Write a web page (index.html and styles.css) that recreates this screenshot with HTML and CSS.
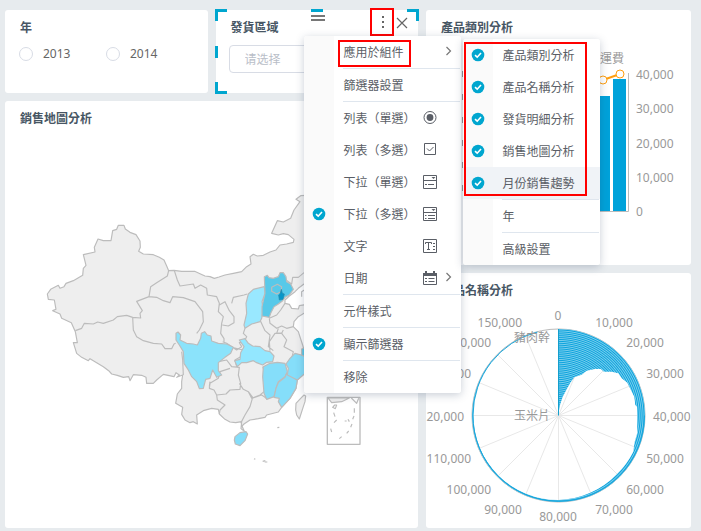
FILE: index.html
```html
<!DOCTYPE html>
<html lang="zh-Hant">
<head>
<meta charset="utf-8">
<meta name="viewport" content="width=device-width, initial-scale=1">
<title>銷售分析</title>
<link rel="stylesheet" href="styles.css">
</head>
<body>
<svg class="defs" width="0" height="0" aria-hidden="true">
  <symbol id="tick" viewBox="0 0 14 14"><circle cx="7" cy="7" r="6.3" fill="#00a6cf"/><path d="M4 7.2 6.2 9.2 10 5" fill="none" stroke="#fff" stroke-width="1.6"/></symbol>
  <symbol id="chevron" viewBox="0 0 8 14"><path d="M1.5 2 5.5 6 1.5 10" fill="none" stroke="#777" stroke-width="1.2"/></symbol>
</svg>
<main class="dashboard">
  <div class="column">
    <div class="filters">
      <section class="card">
        <h2 class="title">年</h2>
        <div class="radios">
          <label class="radio"><input type="radio" name="year">2013</label>
          <label class="radio"><input type="radio" name="year">2014</label>
        </div>
      </section>
      <section class="card selected">
        <h2 class="title"><label for="region">發貨區域</label></h2>
        <select id="region" class="select" lang="zh-Hans"><option>请选择</option></select>
        <svg class="grip" viewBox="0 0 14 6" aria-hidden="true"><path d="M0 1H14M0 5H14" stroke="#777" stroke-width="2"/></svg>
        <div class="tools">
          <button class="tool marked" aria-label="更多"><svg viewBox="0 0 20 22"><path d="M10 4h2v2h-2zM10 9h2v2h-2zM10 14h2v2h-2z" fill="#666"/></svg></button>
          <button class="tool" aria-label="關閉"><svg viewBox="0 0 16 22"><path d="M3 5 13 15M13 5 3 15" stroke="#666" stroke-width="1.2"/></svg></button>
        </div>
        <ul class="menu main-menu">
          <li>
            <button class="item"><span class="mark"></span><span class="name">應用於組件</span><svg class="arrow"><use href="#chevron"/></svg></button>
            <ul class="menu submenu">
              <li><button class="item"><svg class="mark"><use href="#tick"/></svg><span class="name">產品類別分析</span></button></li>
              <li><button class="item"><svg class="mark"><use href="#tick"/></svg><span class="name">產品名稱分析</span></button></li>
              <li><button class="item"><svg class="mark"><use href="#tick"/></svg><span class="name">發貨明細分析</span></button></li>
              <li><button class="item"><svg class="mark"><use href="#tick"/></svg><span class="name">銷售地圖分析</span></button></li>
              <li><button class="item active"><svg class="mark"><use href="#tick"/></svg><span class="name">月份銷售趨勢</span></button></li>
              <li class="divided"><button class="item"><span class="mark"></span><span class="name">年</span></button></li>
              <li class="divided"><button class="item"><span class="mark"></span><span class="name">高級設置</span></button></li>
            </ul>
          </li>
          <li class="divided"><button class="item"><span class="mark"></span><span class="name">篩選器設置</span></button></li>
          <li class="divided"><button class="item"><span class="mark"></span><span class="name">列表（單選）</span><svg class="icon" viewBox="0 0 14 14"><circle cx="7" cy="6.500" r="6"/><circle cx="7" cy="6.500" r="3.400" class="solid"/></svg></button></li>
          <li><button class="item"><span class="mark"></span><span class="name">列表（多選）</span><svg class="icon" viewBox="0 0 14 14"><path d="M1.500.500h11v11h-11zM4 5.500 6.500 8 10.500 4"/></svg></button></li>
          <li><button class="item"><span class="mark"></span><span class="name">下拉（單選）</span><svg class="icon" viewBox="0 0 14 14"><path d="M.5.5h13v13H.5zM.5 5.5h13M2 9.5h2M5 9.5h6"/><path d="M8.500 2h4l-2 2z" class="solid"/></svg></button></li>
          <li><button class="item"><svg class="mark"><use href="#tick"/></svg><span class="name">下拉（多選）</span><svg class="icon" viewBox="0 0 14 14"><path d="M.5.5h13v13H.5zM.5 5.500h13M2 8.500h1.500M5 8.500h7M2 11.500h1.500M5 11.500h7"/><path d="M8.500 2h4l-2 2z" class="solid"/></svg></button></li>
          <li><button class="item"><span class="mark"></span><span class="name">文字</span><svg class="icon" viewBox="0 0 14 14"><path d="M.5.5h13v13H.5zM2.500 5V3.500h6V5M5.500 3.500v7M4 10.500h3M10 4.500h2M10 7.500h2M10 10.500h2"/></svg></button></li>
          <li><button class="item"><span class="mark"></span><span class="name">日期</span><svg class="icon" viewBox="0 0 14 14"><path d="M.5 2.500h13v11H.5zM2 7.500h2M5.500 7.500h6M2 10.500h2M5.500 10.500h6"/><path d="M0 2h2V0h2v2h6V0h2v2h2v3H0z" class="solid"/></svg><svg class="arrow"><use href="#chevron"/></svg></button></li>
          <li class="divided"><button class="item"><span class="mark"></span><span class="name">元件樣式</span></button></li>
          <li class="divided"><button class="item"><svg class="mark"><use href="#tick"/></svg><span class="name">顯示篩選器</span></button></li>
          <li class="divided"><button class="item"><span class="mark"></span><span class="name">移除</span></button></li>
        </ul>
      </section>
    </div>
    <section class="card grow">
      <h2 class="title">銷售地圖分析</h2>
      <svg class="chart" viewBox="5 128 413 400" role="img" aria-label="銷售地圖">
        <g transform="translate(30 160) scale(.33333)" fill="none" stroke="#bcbcbc" stroke-width="3.500" stroke-linejoin="round">
          <!-- mainland -->
          <path fill="#eee" d="M265 196 282 196 286 207 300 217 318 224 330 243 331 262 326 274 340 282 370 284 388 292 402 300 411 320 416 332 432 331 455 334 494 334 510 341 525 348 540 350 553 355 567 351 585 345 610 340 635 335 650 320 663 312 660 290 670 283 682 288 700 286 720 276 738 270 750 255 770 252 790 247 792 238 775 224 760 221 745 225 725 220 742 182 760 186 782 175 792 150 810 125 798 118 812 107 850 105V375L822 372 805 385 795 395 778 408 765 420 765 430 778 433 785 445 805 447 808 437 850 430V440L822 460 805 470 792 485 790 500 805 515 813 540 818 555 825 580H850V640L822 642 802 660 798 685 780 715 755 742 745 756 710 765 705 772 685 776 660 780 642 792 636 798 643 814 633 806 635 785 617 788 600 786 585 778 568 762 565 748 545 745 520 752 500 765 502 792 490 785 480 788 465 780 455 763 458 742 437 730 442 702 455 685 455 665 458 645 440 652 448 645 438 638 432 650 400 643 380 660 370 670 350 670 348 652 335 646 310 644 300 662 296 650 280 652 262 646 245 642 236 632 220 620 200 608 180 596 175 602 155 592 140 580 130 548 142 548 136 515 124 488 95 475 90 462 68 452 78 448 73 420 55 418 52 402 62 388 85 376 90 385 102 380 108 370 130 362 158 346 160 325 168 316 160 284 195 276 193 262 204 237 220 242 243 242 248 212 260 208Z"/>
          <!-- province borders, west and north -->
          <path d="M136 512 155 505 163 490 190 492 203 486 220 490 250 480 262 470 290 466 308 472 332 474 330 460 337 452 320 424 357 410 362 380 380 368 412 348 416 332M308 472 310 510 320 530 340 542 370 550 395 552 405 566 425 566 432 552 437 550M357 410 380 412 400 422 420 428 428 410 460 413 495 425 518 455 520 485 508 510 500 520M433 332 442 360 450 378 470 375 490 372 495 385 512 375 530 385 532 405 560 410 568 430 565 455 580 470 575 490 572 520 582 536 582 545M568 435 585 425 598 452 612 470 612 488 595 498 577 495M605 430 610 412 642 405 652 402M768 360 785 372 788 352 805 352 822 338M815 410 815 395 823 390M718 475 740 465 752 450 765 430M718 475 720 490 740 505 755 498 770 505 790 500M745 505 740 520 755 520 760 510"/>
          <!-- province borders, centre and south -->
          <path d="M645 505 640 520 650 530 642 545 628 548 635 560 620 570 590 550 578 545M690 480 705 512 720 525 715 560 730 572M455 575 458 600 460 645M720 572 718 545 735 520 755 520 770 540 762 560 790 575 785 595 780 610 770 612M605 562 640 570 632 590 615 600 620 620M565 605 590 600 605 620 628 622 625 645 632 670 630 688 600 690 588 702 560 705 552 690 538 685 540 670 565 655 570 635 600 625M560 705 562 720 585 735 570 750 568 762M628 670 640 688 655 695 665 715 690 705 702 695M655 695 668 712 660 740 645 765 632 790M665 715 695 705 705 712 712 718M705 640 698 620M538 680 540 665"/>
          <!-- provinces with sales -->
          <path fill="#99e8ff" d="M655 402 670 388 703 380 705 400 696 425 700 450 695 475 690 485 665 492 645 505 642 495 650 460 648 430Z"/>
          <path fill="#58c9e9" d="M703 350 712 346 717 353 730 355 745 350 750 338 760 338 768 350 770 365 782 372 790 388 778 405 765 412 758 422 745 432 732 440 722 460 718 472 696 468 696 440 705 400Z"/>
          <path fill="#58c9e9" d="M725 382 742 373 755 380 753 395 740 402 725 394Z"/>
          <path fill="#0797c9" stroke="#2588a7" stroke-width="2" d="M750 402 754 388 757 400 763 402 759 418 748 420 746 405Z"/>
          <path fill="#8be3fb" d="M438 520 444 516 452 525 450 540 470 550 490 552 502 555 512 535 514 520 524 515 532 525 543 528 545 543 565 550 590 552 610 562 602 580 585 592 565 608 565 632 575 645 560 652 548 630 540 655 527 658 520 685 508 686 500 665 485 650 475 630 462 610 460 575 448 555 438 540Z"/>
          <path fill="#93e7ff" d="M628 540 645 536 655 550 668 558 690 560 705 572 720 575 732 588 728 605 710 607 698 615 680 608 670 602 650 608 635 608 622 620 614 602 630 598 632 578 642 560Z"/>
          <path fill="#85defa" d="M700 620 720 610 742 607 765 610 772 635 765 650 745 665 738 685 732 710 710 718 702 700 698 650Z"/>
          <path fill="#85defa" d="M770 640 802 660 798 685 780 715 755 742 745 725 748 715 732 712 738 685 745 668 765 652Z"/>
          <path fill="#85defa" d="M768 612 780 595 795 580 825 588V640L802 660 772 645 775 625Z"/>
          <path fill="#58c9e9" d="M815 567 825 562V590L815 585Z"/>
          <path fill="#85defa" d="M615 830 630 818 648 815 653 822 645 842 630 857 616 852 613 840Z"/>
          <path fill="#eee" d="M812 715 822 705 827 708 825 725 820 740 808 777 800 765 797 750 798 730Z"/>
          <!-- South China Sea inset -->
          <path stroke-width="4" d="M892 712H990V853H892Z"/>
          <path fill="#eee" d="M894 714H958L935 725 905 728Z"/>
          <path d="M964 714 980 730 986 715M914 735 920 735 916 746 908 742ZM911 758 915 770M912 788 920 780M902 806 905 816M928 836 935 830M950 820 956 813M962 802 966 792M968 778 972 768M973 758V745M944 783H950M954 778 958 785M742 803 748 802M672 896 676 898M698 904 706 902M704 906 712 906"/>
        </g>
      </svg>
    </section>
  </div>
  <div class="column">
    <section class="card grow">
      <h2 class="title">產品類別分析</h2>
      <svg class="chart" viewBox="426 37 265 228" role="img" aria-label="產品類別分析">
        <path d="M462.500 71v6M462.500 94v6M462.500 117v6M462.500 140v6M462.500 162v6M462.500 185v6" stroke="#999"/>
        <path d="M590 96h20v115h-20zM613 79h13v132h-13z" fill="#00a2da"/>
        <path d="M628.500 73V211.500H590" fill="none" stroke="#bbb"/>
        <path d="M590 84 603 80 620 74" fill="none" stroke="#ff9f0f" stroke-width="2"/>
        <g fill="#fff" stroke="#ff9f0f"><circle cx="603" cy="80" r="4"/><circle cx="620" cy="74" r="4"/></g>
        <g class="axis"><text x="600" y="63">運費</text><text x="636" y="79">40,000</text><text x="636" y="113">30,000</text><text x="636" y="148">20,000</text><text x="636" y="182">10,000</text><text x="636" y="216">0</text></g>
      </svg>
    </section>
    <section class="card grow">
      <h2 class="title">產品名稱分析</h2>
      <svg class="chart" viewBox="426 300 265 228" role="img" aria-label="產品名稱分析">
        <defs><radialGradient id="rings" gradientUnits="userSpaceOnUse" cx="558.500" cy="415.500" r="1.900" spreadMethod="repeat"><stop offset="0" stop-color="#0ba2dc"/><stop offset=".5" stop-color="#7bcfee"/><stop offset="1" stop-color="#0ba2dc"/></radialGradient></defs>
        <path d="M558.500 329V502M472 415.500H645M525.400 335.600 591.600 495.400M497.300 354.300 619.700 476.700M478.600 382.400 638.400 448.600M478.600 448.600 638.400 382.400M497.300 476.700 619.700 354.300M525.400 495.400 591.600 335.600" stroke="#e8e8e8"/>
        <circle cx="558.500" cy="415.500" r="86.500" fill="none" stroke="#bbb"/>
        <path fill="url(#rings)" d="M558 416V329A86.500 86.500 0 1 1 537.500 331.600A85.300 85.300 0 0 0 473.200 415.500A85 85 0 0 0 558.500 500A84 84 0 0 0 617 474A83 83 0 0 0 633.300 451.700L634.700 441.700 637.300 433 637 406.700 635.300 405 634.300 396.700 630 388.300 627.300 382.700 621.700 378.300 618.300 373.300 611.700 371.700 604 371.700 600.700 369 595 369 586.700 370.700 581.700 374.700 574.300 377.300 571 381.700 566.700 389.300 562.700 396.700 560 405Z"/>
        <path d="M558.500 329V415.500" stroke="#159fcd"/>
        <path d="M473 415A85.800 85.800 0 0 0 558.500 501.300A86 86 0 0 0 644.500 415.500" fill="none" stroke="#1aa7dc"/>
        <path d="M473 415A85.800 85.800 0 0 1 537.500 332" fill="none" stroke="#1aa7dc"/>
        <g class="axis">
          <g text-anchor="middle"><text x="558" y="320">0</text><text x="614" y="327">10,000</text><text x="645" y="347">20,000</text><text x="665" y="378">30,000</text><text x="665" y="463">50,000</text><text x="645" y="494">60,000</text><text x="614" y="514">70,000</text><text x="558" y="521">80,000</text><text x="503" y="514">90,000</text></g>
          <text x="653" y="421">40,000</text>
          <g text-anchor="end"><text x="491" y="494">100,000</text><text x="471" y="463">110,000</text><text x="464" y="421">120,000</text><text x="471" y="378">130,000</text><text x="491" y="347">140,000</text><text x="522" y="327">150,000</text><text x="550" y="342">豬肉幹</text><text x="550" y="420">玉米片</text></g>
        </g>
      </svg>
    </section>
  </div>
</main>
</body>
</html>
```
FILE: styles.css
```css
* {
  box-sizing: border-box;
}

body {
  margin: 0;
  background: #e7ebee;
  color: #5a5e66;
  font: 12px/18px "Noto Sans", "Noto Sans CJK TC", sans-serif;
}

button,
select {
  font: inherit;
  color: inherit;
}

.defs {
  position: absolute;
}

.dashboard {
  display: grid;
  grid-template-columns: 413fr 265fr;
  gap: 8px;
  min-height: 100vh;
  padding: 10px 10px 3px 5px;
}

.column {
  display: flex;
  flex-direction: column;
  gap: 8px;
  min-width: 0;
}

.filters {
  display: grid;
  grid-template-columns: 1fr 1fr;
  gap: 8px;
}

.card {
  display: flex;
  flex-direction: column;
  min-width: 0;
  padding-top: 9px;
  background: #fff;
  border-radius: 3px;
}

.grow {
  flex: 1;
}

.title {
  margin: 0 15px;
  color: #475664;
  font-size: 12px;
  font-weight: 600;
}

.chart {
  flex: 1;
  width: 100%;
  min-height: 0;
}

.axis {
  fill: #999;
}

.radios {
  display: flex;
  padding: 8px 14px 30px;
}

.radio {
  display: flex;
  align-items: center;
  gap: 10px;
  width: 87px;
  color: #666;
}

.radio input {
  appearance: none;
  width: 14px;
  height: 14px;
  margin: 0;
  border: 1px solid #d8dce5;
  border-radius: 50%;
}

/* Selected component: teal brackets around the card */
.selected {
  position: relative;
}

.selected::before {
  content: "";
  position: absolute;
  inset: -1px;
  pointer-events: none;
  --bar: linear-gradient(#00a6cf, #00a6cf);
  background:
    var(--bar) 0 0 / 12px 3px,
    var(--bar) 0 0 / 3px 12px,
    var(--bar) 50% 0 / 12px 3px,
    var(--bar) 100% 0 / 12px 3px,
    var(--bar) 100% 0 / 3px 12px,
    var(--bar) 0 50% / 3px 12px,
    var(--bar) 100% 50% / 3px 12px,
    var(--bar) 0 100% / 12px 3px,
    var(--bar) 0 100% / 3px 12px,
    var(--bar) 100% 100% / 12px 3px,
    var(--bar) 100% 100% / 3px 12px;
  background-repeat: no-repeat;
}

.select {
  appearance: none;
  height: 28px;
  margin: 8px 13px 20px;
  padding: 1px 15px 0;
  border: 1px solid #d8dce5;
  border-radius: 4px;
  background: #fff;
  color: #b9bec8;
  font-family: "Noto Sans", "Noto Sans CJK SC", sans-serif;
}

.grip {
  position: absolute;
  top: 5px;
  left: 50%;
  width: 14px;
  height: 6px;
  margin-left: -6px;
}

.tools {
  position: absolute;
  top: -2px;
  right: 8px;
  display: flex;
}

.tool {
  padding: 4px 0 0;
  border: 0;
  background: none;
}

.tool svg {
  display: block;
  width: 16px;
  height: 22px;
}

.tool.marked {
  padding: 2px 0 0;
  border: 2px solid #f00;
}

.tool.marked svg {
  width: 20px;
}

.menu {
  position: absolute;
  margin: 0;
  padding: 0;
  list-style: none;
  background: linear-gradient(to right, #fafafa 30px, #fff 30px);
  border-radius: 3px;
  box-shadow: 0 2px 8px rgba(40, 60, 90, 0.25);
}

.main-menu {
  top: 26px;
  left: 88px;
  z-index: 1;
  width: 157px;
}

.menu > li {
  position: relative;
}

.divided::before {
  content: "";
  display: block;
  height: 1px;
  margin: 0 1px 0 39px;
  background: #dfe6ee;
}

.item {
  display: grid;
  grid-template-columns: 14px minmax(0, 1fr) 14px 8px;
  align-items: center;
  column-gap: 8px;
  width: 100%;
  height: 32px;
  padding: 0 8px;
  border: 0;
  background: none;
  text-align: left;
  white-space: nowrap;
}

.name {
  padding-top: 2px;
}

.main-menu > li > .item .name {
  padding-left: 10px;
}

.item.active {
  background: #f0f3f7;
}

.mark {
  width: 14px;
  height: 14px;
}

.icon {
  width: 14px;
  height: 14px;
  fill: none;
  stroke: #5a5e66;
}

.icon .solid {
  fill: #5a5e66;
  stroke: none;
}

.arrow {
  grid-column: 4;
  width: 8px;
  height: 14px;
}

.submenu {
  top: 3px;
  left: calc(100% + 2px);
  z-index: 2;
  width: 137px;
}

.submenu .item {
  grid-template-columns: 14px 1fr;
  column-gap: 18px;
}

/* Red frames around the highlighted entries */
.main-menu > li:first-child > .item .name::after,
.submenu::after {
  content: "";
  position: absolute;
  box-sizing: border-box;
  border: 2px solid #f00;
  pointer-events: none;
}

.main-menu > li:first-child > .item .name::after {
  top: 4px;
  left: 34px;
  width: 73px;
  height: 27px;
}

.submenu::after {
  top: 3px;
  left: 1px;
  width: 123px;
  height: 154px;
}
```
